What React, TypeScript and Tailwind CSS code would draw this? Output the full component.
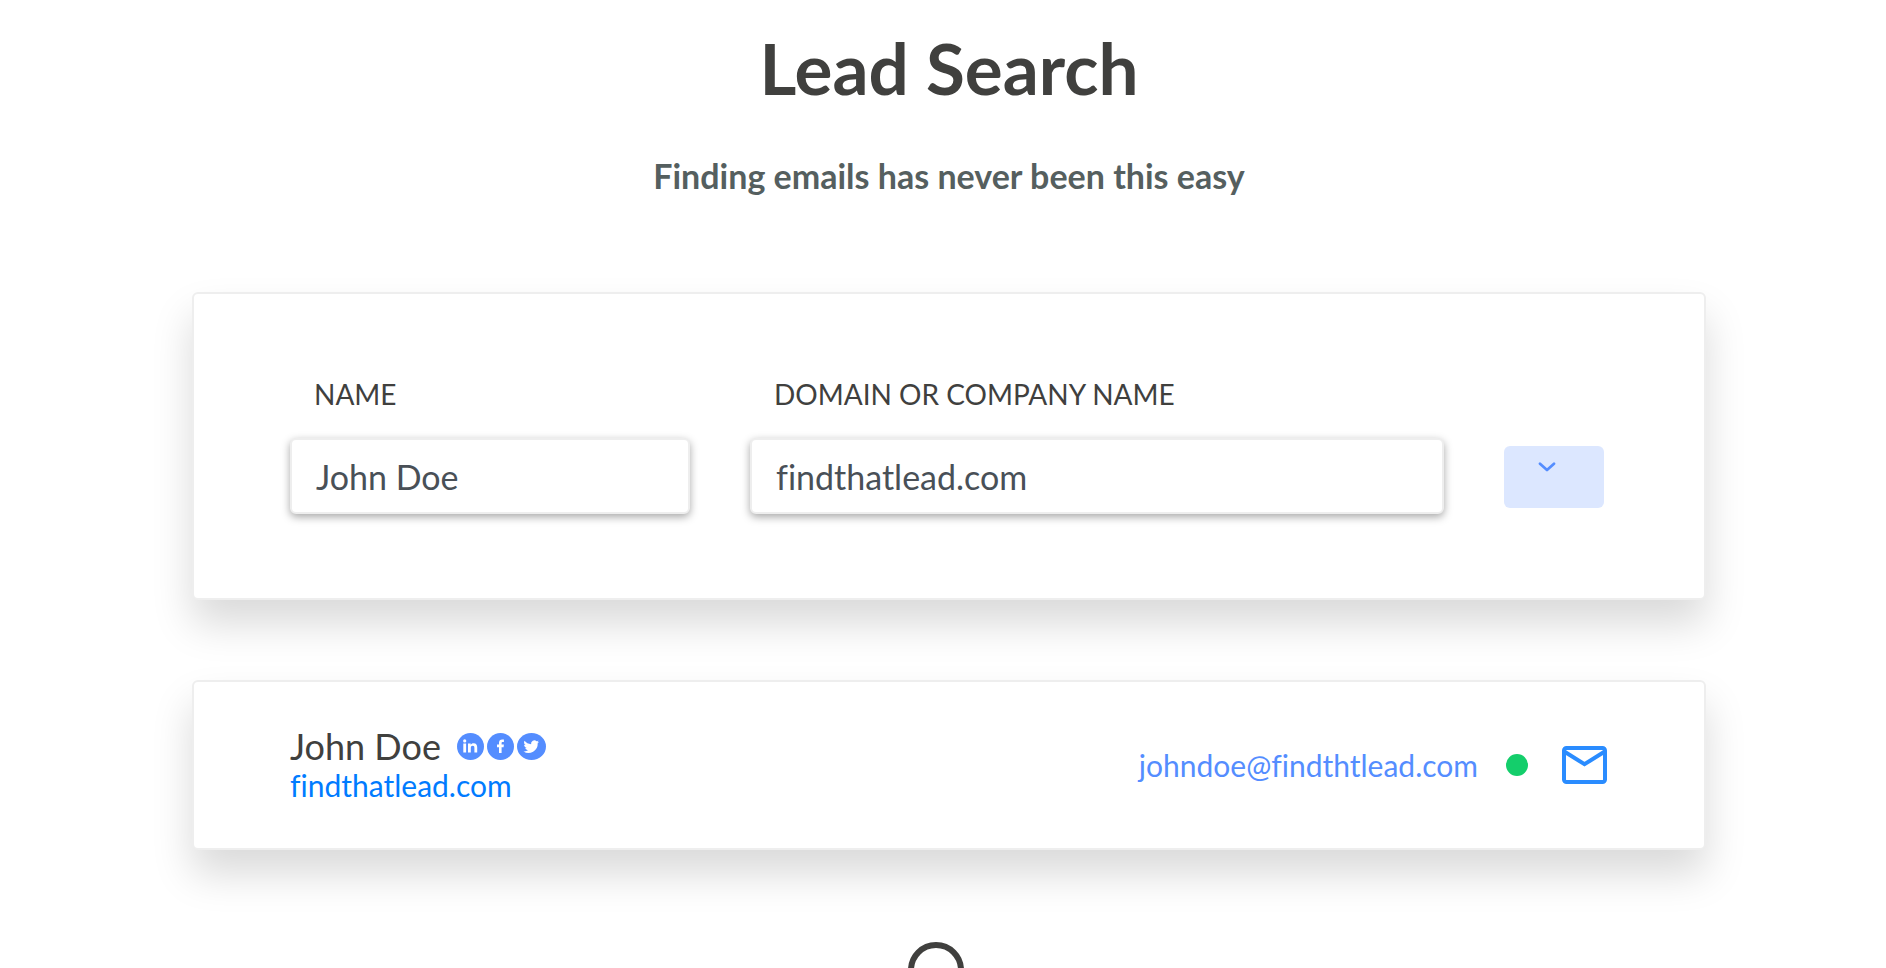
import { useState } from "react";

const socials = [
  {
    name: "LinkedIn",
    href: "#linkedin",
    width: 27,
    icon: (
      <>
        <circle cx="7.7" cy="7.9" r="1.6" />
        <path d="M6.300 10.500h2.800v9H6.300z" />
        <path d="M11 10.500h2.700v1.200c.5-.9 1.500-1.500 2.900-1.500 2.700 0 3.600 1.600 3.600 4.300v5h-2.800v-4.500c0-1.400-.4-2.300-1.700-2.300s-1.900.9-1.900 2.300v4.500H11z" />
      </>
    ),
  },
  {
    name: "Facebook",
    href: "#facebook",
    width: 27,
    icon: (
      <path d="M12 20v-5.800h-2v-2.700h2V9.800c0-2.200 1.200-3.400 3.200-3.400.9 0 1.500.1 1.700.1v2.400h-1.200c-.9 0-1.100.5-1.100 1.200v1.400h2.300l-.3 2.700h-2V20z" />
    ),
  },
  {
    name: "Twitter",
    href: "#twitter",
    width: 29,
    icon: (
      <path d="M22 8.700c-.6.3-1.200.4-1.800.5.6-.4 1.100-1 1.300-1.700-.6.4-1.200.6-1.900.7a3.300 3.300 0 0 0-5.500 3c-2.700-.1-5-1.400-6.600-3.400-.9 1.500-.4 3.400 1 4.300-.5 0-1-.2-1.400-.4 0 1.500 1.100 2.900 2.600 3.200-.5.1-1 .1-1.400 0 .4 1.300 1.600 2.200 3 2.200a6.500 6.500 0 0 1-4.800 1.400 9.200 9.200 0 0 0 14.200-8.200c.5-.4 1-1 1.300-1.600z" />
    ),
  },
];

const cardClass =
  "rounded-md border-2 border-[#eeeeee] bg-white pl-24 shadow-[0_24px_40px_rgba(0,0,0,0.15)]";

const labelClass = "mb-6 block pl-6 text-[28px] leading-10";

const inputClass =
  "h-[76px] w-full rounded-md border-2 border-[#eeeeee] bg-white px-6 text-[34px] text-[#495057] shadow-[0_3px_8px_rgba(0,0,0,0.35)] outline-none [font-variant-ligatures:none]";

export default function App() {
  const [name, setName] = useState("John Doe");
  const [domain, setDomain] = useState("findthatlead.com");

  return (
    <div className="max-h-screen overflow-hidden bg-white pl-48 pr-45 pt-8 font-['Lato',sans-serif] text-[#40403e] [font-variant-ligatures:none]">
      <header className="text-center">
        <h1 className="text-[71px] font-bold leading-[72px]">Lead Search</h1>
        <p className="mt-13 text-[34px] font-bold leading-10 text-[#555f5f]">
          Finding emails has never been this easy
        </p>
      </header>

      {/* Search form */}
      <form
        className={`${cardClass} mt-24 flex items-end gap-15 pb-21 pr-25 pt-20`}
        onSubmit={(e) => e.preventDefault()}
      >
        <div className="min-w-0 flex-[400]">
          <label htmlFor="name" className={labelClass}>
            NAME
          </label>
          <input
            id="name"
            type="text"
            value={name}
            onChange={(e) => setName(e.target.value)}
            className={inputClass}
          />
        </div>
        <div className="min-w-0 flex-[694]">
          <label htmlFor="domain" className={labelClass}>
            DOMAIN OR COMPANY NAME
          </label>
          <input
            id="domain"
            type="text"
            value={domain}
            onChange={(e) => setDomain(e.target.value)}
            className={inputClass}
          />
        </div>
        <button
          type="submit"
          aria-label="Search"
          className="mb-[6px] flex h-[62px] w-25 shrink-0 items-start rounded-md bg-[#dce7ff] pl-[34px] pt-4"
        >
          <svg width="18" height="10" viewBox="0 0 18 10" fill="none">
            <path
              d="M2 1.700 9 8l7-6.300"
              stroke="#548dff"
              strokeWidth="2.700"
              strokeLinecap="round"
              strokeLinejoin="round"
            />
          </svg>
        </button>
      </form>

      {/* Result */}
      <section className={`${cardClass} mt-20 flex items-center justify-between py-11 pr-[97px]`}>
        <div>
          <div className="flex items-center">
            <h2 className="text-[36px] leading-10">{name}</h2>
            <div className="ml-4 flex items-center gap-[3px]">
              {socials.map((social) => (
                <a key={social.name} href={social.href} aria-label={social.name}>
                  <svg
                    width={social.width}
                    height="27"
                    viewBox={`0 0 ${social.width} 27`}
                    fill="#ffffff"
                  >
                    <ellipse
                      cx={social.width / 2}
                      cy="13.5"
                      rx={social.width / 2}
                      ry="13.5"
                      fill="#548dff"
                    />
                    {social.icon}
                  </svg>
                </a>
              ))}
            </div>
          </div>
          <a href="#domain" className="block text-[30px] leading-[38px] text-[#007bff]">
            {domain}
          </a>
        </div>
        <div className="flex items-center">
          <a
            href="mailto:johndoe@findthtlead.com"
            className="text-[30px] leading-[38px] text-[#548dff]"
          >
            johndoe@findthtlead.com
          </a>
          <span className="ml-7 h-[22px] w-[22px] rounded-full bg-[#14ce6b]" />
          <button type="button" aria-label="Send email" className="ml-[34px]">
            <svg width="45" height="38" viewBox="0 0 45 38" fill="none" stroke="#2a8cff" strokeWidth="4">
              <rect x="2" y="2" width="41" height="34" rx="2.500" />
              <path d="M3 6 22.500 18.200 42 6" />
            </svg>
          </button>
        </div>
      </section>

      {/* Loader */}
      <div className="mt-23 flex justify-center pr-[26px]">
        <svg width="56" height="56" viewBox="0 0 56 56" fill="none">
          <circle cx="28" cy="28" r="25" stroke="#40403e" strokeWidth="6" />
        </svg>
      </div>
    </div>
  );
}
